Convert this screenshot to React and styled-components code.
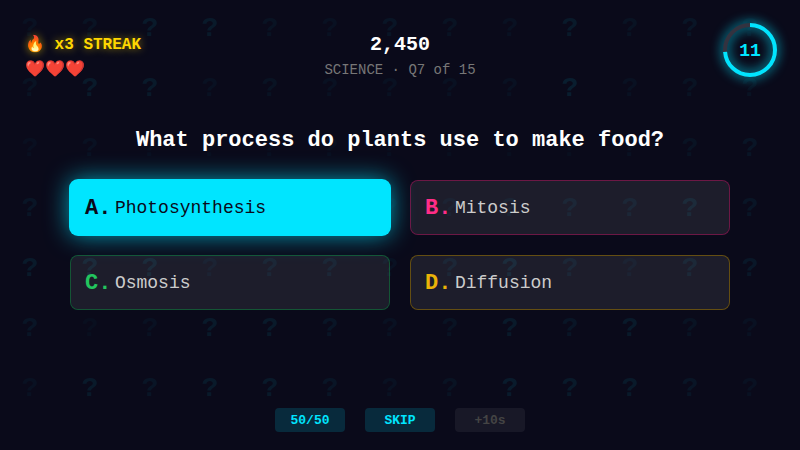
import React from "react";
import styled, { createGlobalStyle } from "styled-components";

const Global = createGlobalStyle`
  html, body { margin: 0; padding: 0; background: #0a0a1a; }
  #root { width: 800px; height: 450px; overflow: hidden; }
`;

const mono = `"Liberation Mono", monospace`;

const Screen = styled.div`
  position: relative;
  width: 800px;
  height: 450px;
  overflow: hidden;
  background: #0a0a1a;
  font-family: ${mono};
  display: flex;
  flex-direction: column;
`;

const Pattern = styled.div`
  position: absolute;
  inset: 0;
  display: grid;
  grid-template-columns: repeat(13, 60px);
  grid-auto-rows: 60px;
  pointer-events: none;
`;

const Mark = styled.span`
  display: flex;
  align-items: center;
  justify-content: center;
  padding-bottom: 4px;
  box-sizing: border-box;
  font: bold 28px ${mono};
  color: #00e5ff;
  opacity: ${(p) => p.$alpha};
`;

const Content = styled.div`
  position: relative;
  display: flex;
  flex-direction: column;
  flex: 1;
`;

const Header = styled.header`
  display: grid;
  grid-template-columns: 1fr auto 1fr;
  align-items: start;
  height: 56px;
  padding: 22px 22px 0;
`;

const Status = styled.div`
  display: flex;
  flex-direction: column;
  gap: 6px;
  padding: 12px 0 0 3px;
`;

const Streak = styled.div`
  font-size: 16px;
  font-weight: bold;
  color: #ffd700;
  text-shadow: 0 0 8px rgba(255, 215, 0, 0.6);
`;

const Lives = styled.div`
  font-size: 16px;
  line-height: 20px;
`;

const Score = styled.div`
  display: flex;
  flex-direction: column;
  align-items: center;
  gap: 6px;
  padding-top: 11px;
`;

const Points = styled.div`
  font-size: 20px;
  font-weight: bold;
  color: #ffffff;
`;

const Topic = styled.div`
  font-size: 14px;
  color: #777777;
`;

const Timer = styled.div`
  position: relative;
  justify-self: end;
  box-sizing: border-box;
  width: 56px;
  height: 56px;
  padding-top: 2px;
  display: flex;
  align-items: center;
  justify-content: center;
  font-size: 18px;
  font-weight: bold;
  color: #00e5ff;
`;

const Ring = styled.svg`
  position: absolute;
  inset: 0;
  filter: drop-shadow(0 0 6px #00e5ff);
`;

const Question = styled.h1`
  margin: 50px 0 0;
  font-size: 22px;
  line-height: 26px;
  font-weight: bold;
  color: #ffffff;
  text-align: center;
`;

const Answers = styled.div`
  display: grid;
  grid-template-columns: repeat(2, 320px);
  grid-auto-rows: 55px;
  gap: 20px;
  justify-content: center;
  margin-top: 26px;
`;

const Answer = styled.button`
  box-sizing: border-box;
  display: flex;
  align-items: center;
  gap: 3.5px;
  padding: 1px 14px 0;
  border: 1px solid ${(p) => p.$border};
  border-radius: 8px;
  background: rgba(255, 255, 255, 0.08);
  background-clip: padding-box;
  color: #cccccc;
  font: 18px ${mono};
  text-align: left;
`;

const Chosen = styled(Answer)`
  background: #00e5ff;
  color: #0a0a1a;
  box-shadow: 0 0 0 1px #00e5ff, 0 0 24px rgba(0, 229, 255, 0.7);
`;

const Letter = styled.span`
  font-size: 22px;
  font-weight: bold;
  color: ${(p) => p.$color};
`;

const Powers = styled.div`
  display: flex;
  justify-content: center;
  gap: 20px;
  margin-top: auto;
  padding-bottom: 18px;
`;

const Power = styled.button`
  width: 70px;
  height: 24px;
  padding: 0;
  border: 0;
  border-radius: 4px;
  background: ${(p) => (p.disabled ? "rgba(255,255,255,0.06)" : "rgba(0,229,255,0.15)")};
  color: ${(p) => (p.disabled ? "#444444" : "#00e5ff")};
  font: bold 13px ${mono};
`;

const alphas = [
  [.03,.04,.07,.07,.04,.03,.05,.04,.03,.07,.04,.05,.03],
  [.04,.07,.07,.03,.04,.03,.03,.03,.03,.09,.03,.04,.04],
  [.025,.03,.025,.02,.025,.025,.025,.02,.02,.02,.03,.04,.05],
  [.05,.02,.02,.02,.03,.03,.025,.03,.04,.05,.05,.07,.05],
  [.07,.07,.07,.03,.05,.05,.03,.05,.08,.05,.03,.06,.06],
  [.05,.02,.03,.07,.07,.05,.03,.04,.07,.05,.07,.04,.03],
  [.03,.07,.05,.07,.07,.05,.03,.04,.08,.07,.07,.05,.03],
];

const answers = [
  { key: "A.", text: "Photosynthesis", color: "#0a0a1a", chosen: true },
  { key: "B.", text: "Mitosis", color: "#ff2d87", border: "rgba(255,45,135,0.4)" },
  { key: "C.", text: "Osmosis", color: "#22c55e", border: "rgba(34,197,94,0.4)" },
  { key: "D.", text: "Diffusion", color: "#eab308", border: "rgba(234,179,8,0.4)" },
];

export default function App() {
  const r = 25;
  const c = 2 * Math.PI * r;
  return (
    <Screen>
      <Global />
      <Pattern>
        {alphas.flat().map((a, i) => (
          <Mark key={i} $alpha={a}>?</Mark>
        ))}
      </Pattern>
      <Content>
        <Header>
          <Status>
            <Streak>🔥 x3 STREAK</Streak>
            <Lives>❤️❤️❤️</Lives>
          </Status>
          <Score>
            <Points>2,450</Points>
            <Topic>SCIENCE · Q7 of 15</Topic>
          </Score>
          <Timer>
            <Ring width="56" height="56" viewBox="0 0 56 56">
              <circle cx="28" cy="28" r={r} fill="none" stroke="#333340" strokeWidth="4" />
              <circle
                cx="28" cy="28" r={r} fill="none" stroke="#00e5ff" strokeWidth="4"
                strokeDasharray={`${c * 11 / 15} ${c}`}
                transform="rotate(-90 28 28)"
              />
            </Ring>
            11
          </Timer>
        </Header>
        <Question>What process do plants use to make food?</Question>
        <Answers>
          {answers.map((a) => {
            const Item = a.chosen ? Chosen : Answer;
            return (
              <Item key={a.key} $border={a.border || "#00e5ff"}>
                <Letter $color={a.color}>{a.key}</Letter>
                {a.text}
              </Item>
            );
          })}
        </Answers>
        <Powers>
          <Power>50/50</Power>
          <Power>SKIP</Power>
          <Power disabled>+10s</Power>
        </Powers>
      </Content>
    </Screen>
  );
}
